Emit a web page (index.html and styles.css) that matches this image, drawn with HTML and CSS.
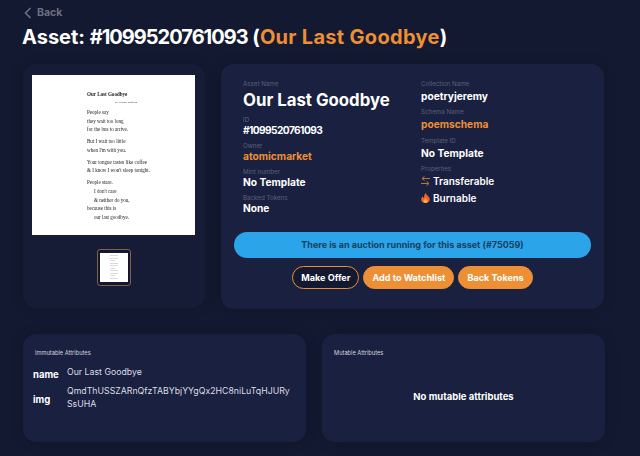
FILE: index.html
```html
<!DOCTYPE html>
<html lang="en">
<head>
  <meta charset="UTF-8" />
  <title>Asset #1099520761093</title>
  <link rel="stylesheet" href="styles.css">
</head>
<body>
  <div class="page">
    <a class="back">
      <svg class="back-icon" width="10" height="14" viewBox="0 0 10 14"><path d="M7.500 2 2.500 7l5 5" fill="none" stroke="currentColor" stroke-width="1.600"/></svg>
      Back
    </a>
    <h1>Asset: <span class="title-id">#1099520761093</span> (<span class="orange title-name">Our Last Goodbye</span>)</h1>

    <div class="top-row">
      <div class="card media-card">
        <div class="poem">
          <div class="poem-title">Our Last Goodbye</div>
          <div class="poem-by">by Jeremy Shifford</div>
          <p>People say<br>they wait too long<br>for the bus to arrive.</p>
          <p>But I wait too little<br>when I'm with you.</p>
          <p>Your tongue tastes like coffee<br>&amp; I know I won't sleep tonight.</p>
          <p>People stare.<br><span class="indent">I don't care</span><br><span class="indent">&amp; neither do you,</span><br>because this is<br><span class="indent">our last goodbye.</span></p>
        </div>
        <div class="thumb">
          <div class="thumb-page">
            <i></i><i></i><i></i><i></i><i></i><i></i><i></i><i></i><i></i><i></i>
          </div>
        </div>
      </div>

      <div class="card info-card">
        <div class="info-cols">
          <div class="info-col">
            <div class="label">Asset Name</div>
            <div class="value-big">Our Last Goodbye</div>
            <div class="label">ID</div>
            <div class="value value-id">#1099520761093</div>
            <div class="label">Owner</div>
            <div class="value orange">atomicmarket</div>
            <div class="label">Mint number</div>
            <div class="value">No Template</div>
            <div class="label">Backed Tokens</div>
            <div class="value">None</div>
          </div>
          <div class="info-col info-col-right">
            <div class="label">Collection Name</div>
            <div class="value">poetryjeremy</div>
            <div class="label">Schema Name</div>
            <div class="value orange">poemschema</div>
            <div class="label">Template ID</div>
            <div class="value">No Template</div>
            <div class="label">Properties</div>
            <div class="prop">
              <svg width="9" height="10" viewBox="0 0 9 10"><path d="M9 2.500H1.500M3.500.5 1 2.500l2.500 2M0 7.500h7.500M5.500 5.500 8 7.500l-2.500 2" fill="none" stroke="#b5763a" stroke-width="1"/></svg>
              Transferable
            </div>
            <div class="prop">
              <svg width="9" height="10" viewBox="0 0 9 10"><path d="M4.700 0C5.200 2 8.800 3.600 8.800 6.600 8.800 8.600 7 10 4.500 10S.2 8.600.2 6.600C.2 5 1 4 1.800 3.200 2 4.200 2.500 4.700 3 4.800 3 3 3.500 1.200 4.700 0Z" fill="#f2622e"/><path d="M4.600 5C5 6 6.500 6.800 6.500 8.200 6.500 9.300 5.600 10 4.500 10S2.500 9.300 2.500 8.200C2.500 7 4 6.300 4.600 5Z" fill="#fbb03b"/></svg>
              Burnable
            </div>
          </div>
        </div>
        <div class="auction">There is an auction running for this asset (#75059)</div>
        <div class="actions">
          <button class="btn btn-outline">Make Offer</button>
          <button class="btn">Add to Watchlist</button>
          <button class="btn">Back Tokens</button>
        </div>
      </div>
    </div>

    <div class="bottom-row">
      <div class="card attr-card">
        <div class="attr-heading">Immutable Attributes</div>
        <div class="attr-row">
          <div class="attr-key">name</div>
          <div class="attr-val">Our Last Goodbye</div>
        </div>
        <div class="attr-row">
          <div class="attr-key">img</div>
          <div class="attr-val">QmdThUSSZARnQfzTABYbjYYgQx2HC8niLuTqHJURy<br>SsUHA</div>
        </div>
      </div>
      <div class="card attr-card">
        <div class="attr-heading">Mutable Attributes</div>
        <div class="no-attrs">No mutable attributes</div>
      </div>
    </div>
  </div>
</body>
</html>
```

FILE: styles.css
```css
html, body {
  margin: 0;
  padding: 0;
  height: 456px;
  overflow: hidden;
}

body {
  font-family: Inter, "Open Sans", sans-serif;
  background: #131930;
  color: #fff;
}

.page {
  padding: 5px 35px 0 23px;
}

.orange {
  color: #ed8f35;
}

.back {
  display: flex;
  align-items: center;
  gap: 4px;
  height: 15px;
  font-size: 10.5px;
  font-weight: 700;
  color: #6c7080;
}

h1 {
  margin: 4px 0 0 -1px;
  font-size: 20px;
  line-height: 26px;
  font-weight: 700;
}

.title-id {
  letter-spacing: -1px;
}

.title-name {
  letter-spacing: 0.3px;
}

.card {
  border-radius: 13px;
  background: #1a2040;
  box-sizing: border-box;
  box-shadow: 0 0 14px rgba(0, 0, 0, 0.15);
}

.top-row {
  display: flex;
  gap: 16px;
  margin-top: 14px;
}

.media-card {
  width: 182px;
  height: 244px;
  padding: 11px 10px 0 9px;
  background: #161c36;
}

.poem {
  height: 160px;
  box-sizing: border-box;
  padding: 15px 0 0 55px;
  background: #fff;
  color: #222;
  font-family: "Liberation Serif", serif;
  font-size: 5.05px;
  line-height: 8.6px;
}

.poem p {
  margin: 3.4px 0 0;
  filter: blur(0.25px);
}

.poem-title {
  font-weight: 700;
  filter: blur(0.25px);
}

.poem-by {
  margin: 0 0 1.500px 28px;
  font-size: 2.900px;
  line-height: 6px;
  filter: blur(0.25px);
}

.indent {
  padding-left: 7px;
}

.thumb {
  width: 34px;
  height: 37px;
  margin: 14px auto 0;
  box-sizing: border-box;
  padding: 3px 2px;
  border: 1px solid #83603f;
  border-radius: 3px;
  background: #121732;
}

.thumb-page {
  height: 29px;
  box-sizing: border-box;
  padding: 2px 0 0 10px;
  background: #fff;
}

.thumb-page i {
  display: block;
  width: 8px;
  height: 1px;
  margin-bottom: 1.500px;
  background: #dadada;
}

.thumb-page i:nth-child(3n) {
  width: 5px;
}

.info-card {
  width: 383px;
  height: 245px;
  padding: 15px 13px 0;
}

.info-cols {
  display: flex;
  padding-left: 9px;
}

.info-col {
  flex: none;
  width: 178px;
}

.label {
  font-size: 6.2px;
  line-height: 9px;
  color: #5b6078;
}

.value {
  font-size: 10.2px;
  line-height: 13.5px;
  font-weight: 700;
  margin: 0 0 3.8px;
}

.value-id {
  letter-spacing: -0.6px;
}

.info-col-right .value {
  margin-top: 2px;
}

.value-big {
  font-size: 16.8px;
  line-height: 22px;
  font-weight: 700;
  margin: 0.5px 0 4px;
}

.prop {
  display: flex;
  align-items: center;
  gap: 3px;
  height: 16.5px;
  font-size: 10px;
  font-weight: 600;
}

.auction {
  height: 26px;
  margin-top: 12px;
  border-radius: 13px;
  background: #2ca4e9;
  color: #17405f;
  font-size: 9px;
  line-height: 25px;
  font-weight: 700;
  text-align: center;
}

.actions {
  display: flex;
  justify-content: center;
  gap: 4px;
  margin-top: 8px;
}

.btn {
  height: 23px;
  padding: 0 8px;
  border: 1px solid #ed8f35;
  border-radius: 12px;
  background: #ed8f35;
  color: #fff;
  font-family: inherit;
  font-size: 9.1px;
  font-weight: 700;
}

.btn-outline {
  background: #131930;
}

.bottom-row {
  display: flex;
  gap: 16px;
  margin-top: 25px;
}

.attr-card {
  width: 283px;
  height: 108px;
  padding: 14px 12px 0;
}

.attr-heading {
  margin-bottom: 8px;
  font-size: 5.7px;
  line-height: 9px;
  color: #d5d6dd;
}

.attr-row {
  display: flex;
  align-items: center;
  margin-bottom: 5px;
}

.attr-key {
  flex: none;
  width: 34px;
  margin-left: -2px;
  padding-top: 4px;
  font-size: 9.5px;
  font-weight: 700;
}

.attr-val {
  font-size: 8.75px;
  line-height: 12.5px;
  color: #dcdde3;
}

.no-attrs {
  margin-top: 34px;
  text-align: center;
  font-size: 9.5px;
  font-weight: 700;
}
```
